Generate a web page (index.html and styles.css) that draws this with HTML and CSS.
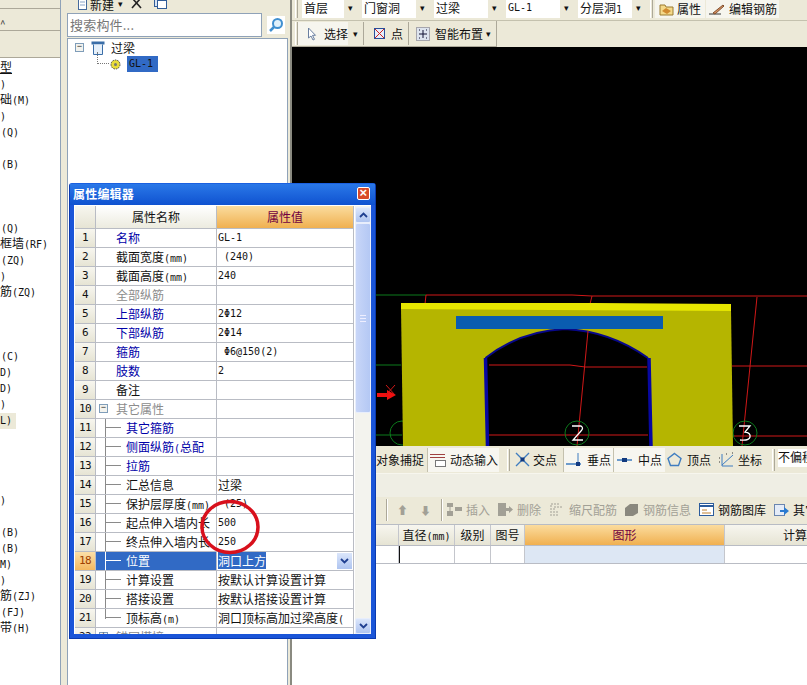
FILE: index.html
```html
<!DOCTYPE html>
<html lang="zh">
<head>
<meta charset="utf-8">
<title>属性编辑器</title>
<link rel="stylesheet" href="styles.css">
</head>
<body>
<div class="app">
  <aside class="left">
    <div class="l-band l-band-a"></div>
    <div class="l-band l-band-b"><span class="caret">^</span></div>
    <div class="l-band l-band-c"></div>
    <div class="l-list">
      <div class="li u">型</div><div class="li"><i>)</i></div><div class="li">础<i>(M)</i></div><div class="li"><i>)</i></div><div class="li pad"><i>(Q)</i></div><div class="li"></div><div class="li pad"><i>(B)</i></div><div class="li"></div><div class="li"></div><div class="li"></div>
      <div class="li pad"><i>(Q)</i></div><div class="li">框墙<i>(RF)</i></div><div class="li pad"><i>(ZQ)</i></div><div class="li"><i>)</i></div><div class="li">筋<i>(ZQ)</i></div><div class="li"></div><div class="li"></div><div class="li"></div>
      <div class="li pad"><i>(C)</i></div><div class="li"><i>D)</i></div><div class="li"><i>D)</i></div><div class="li"><i>)</i></div><div class="li"><i class="cur">L)</i></div><div class="li"></div><div class="li"></div><div class="li"></div><div class="li"></div>
      <div class="li"><i>)</i></div><div class="li"></div><div class="li pad"><i>(B)</i></div><div class="li pad"><i>(B)</i></div><div class="li"><i>M)</i></div><div class="li"><i>)</i></div><div class="li">筋<i>(ZJ)</i></div><div class="li pad"><i>(FJ)</i></div><div class="li">带<i>(H)</i></div>
    </div>
  </aside>

  <section class="mid">
    <div class="mid-bar">
      <svg class="mb-ic" viewBox="0 0 9 13"><rect x="0.500" y="1.500" width="8" height="11" fill="#fff" stroke="#456a9c"/><path d="M2 5h5M2 8h5" stroke="#8aa5c8"/></svg>
      <span class="mb-txt">新建</span><span class="mb-arrow">▾</span>
      <svg class="ic-x" viewBox="0 0 11 11"><path d="M1 10 9 1M2 1l8 9" stroke="#222" stroke-width="1.600"/></svg>
      <svg class="ic13" viewBox="0 0 14 13"><rect x="1.500" y="0.500" width="8" height="9" fill="#d8e4f4" stroke="#2f5c98"/><rect x="4.500" y="3.500" width="9" height="8" fill="#fff" stroke="#2f5c98"/></svg>
    </div>
    <div class="search">
      <div class="search-in">搜索构件...</div>
      <div class="search-btn"><svg viewBox="0 0 16 16" width="16" height="16"><circle cx="9.500" cy="6.500" r="4.500" fill="#dff0fb" stroke="#3f8fd0" stroke-width="2"/><path d="M6 10 2 14" stroke="#3f8fd0" stroke-width="2.500"/></svg></div>
    </div>
    <div class="tree">
      <div class="t-root">
        <span class="box">−</span>
        <svg class="t-ic" viewBox="0 0 14 14"><rect x="0.500" y="0.500" width="13" height="3" fill="#3b6ea8"/><path d="M2.500 3.500v10h9v-10" fill="#e6f0fa" stroke="#3b6ea8"/></svg>
        <span>过梁</span>
      </div>
      <div class="t-child">
        <span class="dots"></span>
        <svg class="t-gear" viewBox="0 0 11 11"><circle cx="5.500" cy="5.500" r="4.500" fill="#e8dc3a" stroke="#444" stroke-dasharray="1.500 1"/><circle cx="5.500" cy="5.500" r="1.500" fill="#777"/></svg>
        <span class="t-sel m">GL-1</span>
      </div>
    </div>
  </section>

  <main class="right">
    <div class="bar1">
      <span class="grip"></span>
      <div class="sel s1"><span>首层</span><b>▾</b></div>
      <div class="sel s2"><span>门窗洞</span><b>▾</b></div>
      <div class="sel s2"><span>过梁</span><b>▾</b></div>
      <div class="sel s2"><span class="m">GL-1</span><b>▾</b></div>
      <div class="sel s2"><span>分层洞<i class="m">1</i></span><b>▾</b></div>
      <span class="grip g-b1"></span>
      <div class="tb tb-a"><svg class="ic16" viewBox="0 0 16 14"><path d="M1 3h5l1 2h7v8H1z" fill="#f4d98a" stroke="#9a7a30"/><path d="M3 9l4-3 5 3-4 3z" fill="#d08a30"/></svg>属性</div>
      <div class="tb tb-b"><svg class="ic16" viewBox="0 0 16 14"><path d="M0 12h12" stroke="#333"/><path d="M4 11 14 3l1 1-9 8z" fill="#d89060" stroke="#805030"/></svg>编辑钢筋</div>
    </div>
    <div class="bar2">
      <div class="bar2-in">
        <span class="grip"></span>
        <div class="tb2 pick"><svg class="ic-ptr" viewBox="0 0 10 14"><path d="M1.500 1v10l2.500-2 2 4 1.500-.7-2-4h3z" fill="#fff" stroke="#6a7fa0"/></svg><span>选择</span><b>▾</b></div>
        <div class="tb2 pt"><svg class="ic-pt" viewBox="0 0 11 11"><rect x="0.500" y="0.500" width="10" height="10" fill="#e6eefa" stroke="#2a4f9a"/><path d="M1 1l9 9M10 1l-9 9" stroke="#d02020"/></svg><span>点</span></div>
        <div class="tb2 smart"><svg class="ic-sm" viewBox="0 0 14 14"><rect x="0.500" y="0.500" width="13" height="13" fill="#dde4ee" stroke="#667" stroke-dasharray="1 1"/><path d="M7 3v8M3 7h8" stroke="#113"/><path d="M3 3h1M10 3h1M3 11h1M10 11h1" stroke="#113"/></svg><span>智能布置</span><b>▾</b></div>
      </div>
    </div>
    <div class="canvas">
      <svg class="scene" viewBox="292 47 515 399" width="515" height="399">
        <g fill="none">
          <path d="M292 295H426M292 365H401M292 435H402" stroke="#0c7a1c"/>
          <path d="M426 295H572L592 296H807M426 295 425 304M592 296 590 304M757 297 742 446M732 366H807M733 436H807" stroke="#d01818"/>
          <circle cx="745" cy="433" r="12" stroke="#0c7a1c"/><circle cx="402" cy="433" r="12" stroke="#0c7a1c"/>
        </g>
        <path d="M401 308 731 310 733 446H403Z" fill="#b5b500"/>
        <path d="M401 303 595 303 731 304V311L401 309Z" fill="#e6e600"/>
        <path d="M485 358Q520 331 565 329Q610 331 648 358L651 446H487Z" fill="#000"/>
        <path d="M485.500 358Q520 331 565 329Q610 331 648 358" fill="none" stroke="#08088a" stroke-width="2"/>
        <path d="M485.500 358 487.500 446M649 358 651 446" fill="none" stroke="#0808a0" stroke-width="3.500"/>
        <path d="M489 365H570L585 367H647M489 435H648M588 331 577 446" fill="none" stroke="#d01818"/>
        <circle cx="577" cy="433" r="12" fill="none" stroke="#0c7a1c"/>
        <rect x="456" y="316" width="207" height="13" fill="#0a5cb0"/>
        <path d="M377 393h10v-3l9 5-9 5v-3h-10z" fill="#f01010"/>
        <path d="M386 385l9 10M395 385l-9 10" stroke="#d01818" fill="none"/>
        <path d="M572 426h9q3 2 0 5l-8 9h10M739 426h11l-5 6q6 1 5 5t-10 3" fill="none" stroke="#fff" stroke-width="1.300"/>
      </svg>
    </div>
    <div class="status">
      <div class="st-fill"></div>
      <div class="st-item st-snap">对象捕捉</div>
      <div class="st-btn st-dyn"><svg class="ic16b" viewBox="0 0 16 14"><path d="M0 1.500h15M0 4.500h15" stroke="#a04040"/><rect x="5.500" y="7.500" width="10" height="6" fill="#fff" stroke="#777"/></svg>动态输入</div>
      <span class="grip g-st"></span>
      <div class="st-item st-x"><svg class="ic15" viewBox="0 0 15 15"><path d="M1 1l13 13M14 1 1 14" stroke="#3f7dc0" stroke-width="1.400"/><rect x="5.500" y="5.500" width="4" height="4" fill="#123a80"/></svg>交点</div>
      <div class="st-btn st-perp"><svg class="ic15" viewBox="0 0 15 15"><path d="M0 12h15" stroke="#3f7dc0" stroke-width="1.500"/><path d="M12 1v13" stroke="#3f7dc0"/><rect x="10" y="10" width="4" height="4" fill="#123a80"/></svg>垂点</div>
      <div class="st-btn st-mid"><svg class="ic15" viewBox="0 0 15 15"><path d="M0 8h15" stroke="#3f7dc0" stroke-width="1.500"/><rect x="5" y="6" width="5" height="4" fill="#123a80"/></svg>中点</div>
      <div class="st-item st-top"><svg class="ic15" viewBox="0 0 15 15"><path d="M7.500 1.500 14 6.500 11.500 13.500H3.500L1 6.500Z" fill="none" stroke="#3f7dc0" stroke-width="1.400"/></svg>顶点</div>
      <div class="st-item st-co"><svg class="ic17" viewBox="0 0 17 15"><path d="M4 2v12h11M4 13 15 3" stroke="#3f7dc0" fill="none"/><path d="M1 6h1M1 10h1M8 2h1M14 1h1" stroke="#333"/></svg>坐标</div>
      <span class="grip g-st2"></span>
      <div class="st-sel">不偏移</div>
    </div>
    <div class="band"></div>
    <div class="bar3">
      <span class="sep3"></span>
      <span class="ar3">⬆</span><span class="ar3">⬇</span>
      <span class="sep3"></span>
      <div class="act off a-ins"><svg class="ic15" viewBox="0 0 15 13"><path d="M0 0h6v4H0zM0 8h6v5H0zM8 4h7v4H8z" fill="#a2a096"/><path d="M3 4v4" stroke="#a2a096"/></svg>插入</div>
      <div class="act off a-del"><svg class="ic15" viewBox="0 0 15 13"><path d="M0 0h8v13H0zM8 5h3V3l4 3.500L11 10V8H8z" fill="#a2a096"/></svg>删除</div>
      <div class="act off a-scale"><svg class="ic15" viewBox="0 0 15 13"><path d="M1 13V1h9M4 13V4h8M7 13V7" fill="none" stroke="#a2a096" stroke-dasharray="2 1"/></svg>缩尺配筋</div>
      <div class="act off a-info"><svg class="ic15" viewBox="0 0 15 13"><path d="M1 5 6 1h8v9l-5 3H1z" fill="#8a887e"/></svg>钢筋信息</div>
      <div class="act a-lib"><svg class="ic15" viewBox="0 0 15 13"><rect x="0.500" y="0.500" width="14" height="12" fill="#fff" stroke="#2c5c9c"/><path d="M1 3h13" stroke="#2c5c9c" stroke-width="2"/><path d="M3 7h5M3 10h9" stroke="#c08030"/></svg>钢筋图库</div>
      <div class="act a-oth"><svg class="ic15" viewBox="0 0 15 13"><rect x="0.500" y="1.500" width="10" height="11" fill="#e4ecf8" stroke="#6a86b0"/><path d="M6 7h4V4l5 4-5 4V9H6z" fill="#2a7ad0"/></svg>其它</div>
    </div>
    <div class="grid-h">
      <div class="c c0"></div><div class="c c1">直径<i class="m">(mm)</i></div><div class="c c2">级别</div><div class="c c3">图号</div><div class="c c4">图形</div><div class="c c5">计算</div>
    </div>
    <div class="grid-r">
      <div class="c c0"></div><div class="c c1 caret-l"></div><div class="c c2"></div><div class="c c3"></div><div class="c c4"></div><div class="c c5"></div>
    </div>
  </main>
</div>

<div class="dlg">
  <div class="dlg-t"><span>属性编辑器</span><span class="dlg-x">×</span></div>
  <div class="dlg-b">
    <div class="sheet">
      <div class="r hd"><div class="n"></div><div class="k">属性名称</div><div class="v">属性值</div></div>
      <div class="r"><div class="n">1</div><div class="k a">名称</div><div class="v m">GL-1</div></div>
      <div class="r"><div class="n">2</div><div class="k">截面宽度<i class="m">(mm)</i></div><div class="v m">&nbsp;(240)</div></div>
      <div class="r"><div class="n">3</div><div class="k">截面高度<i class="m">(mm)</i></div><div class="v m">240</div></div>
      <div class="r"><div class="n">4</div><div class="k off">全部纵筋</div><div class="v"></div></div>
      <div class="r"><div class="n">5</div><div class="k a">上部纵筋</div><div class="v m">2Φ12</div></div>
      <div class="r"><div class="n">6</div><div class="k a">下部纵筋</div><div class="v m">2Φ14</div></div>
      <div class="r"><div class="n">7</div><div class="k a">箍筋</div><div class="v m">&nbsp;Φ6@150(2)</div></div>
      <div class="r"><div class="n">8</div><div class="k a">肢数</div><div class="v m">2</div></div>
      <div class="r"><div class="n">9</div><div class="k">备注</div><div class="v"></div></div>
      <div class="r"><div class="n">10</div><div class="k off grp"><span class="box abs">−</span>其它属性</div><div class="v"></div></div>
      <div class="r"><div class="n">11</div><div class="k a sub">其它箍筋</div><div class="v"></div></div>
      <div class="r"><div class="n">12</div><div class="k a sub">侧面纵筋<i class="m">(</i>总配</div><div class="v"></div></div>
      <div class="r"><div class="n">13</div><div class="k a sub">拉筋</div><div class="v"></div></div>
      <div class="r"><div class="n">14</div><div class="k sub">汇总信息</div><div class="v">过梁</div></div>
      <div class="r"><div class="n">15</div><div class="k sub">保护层厚度<i class="m">(mm)</i></div><div class="v m">&nbsp;(25)</div></div>
      <div class="r"><div class="n">16</div><div class="k sub">起点伸入墙内长</div><div class="v m">500</div></div>
      <div class="r"><div class="n">17</div><div class="k sub">终点伸入墙内长</div><div class="v m">250</div></div>
      <div class="r now"><div class="n">18</div><div class="k sub">位置</div><div class="v"><span class="hl">洞口上方</span><span class="dd"><svg viewBox="0 0 9 6" width="9" height="6"><path d="M1 1l3.500 3.500L8 1" fill="none" stroke="#1f3f90" stroke-width="1.800"/></svg></span></div></div>
      <div class="r"><div class="n">19</div><div class="k sub">计算设置</div><div class="v">按默认计算设置计算</div></div>
      <div class="r"><div class="n">20</div><div class="k sub">搭接设置</div><div class="v">按默认搭接设置计算</div></div>
      <div class="r"><div class="n">21</div><div class="k sub last">顶标高<i class="m">(m)</i></div><div class="v">洞口顶标高加过梁高度<i class="m">(</i></div></div>
      <div class="r tail"><div class="n">22</div><div class="k off grp"><span class="box abs">+</span>锚固搭接</div><div class="v"></div></div>
    </div>
    <div class="sb">
      <div class="sb-b"><svg viewBox="0 0 9 6" width="9" height="6"><path d="M1 5l3.500-3.500L8 5" fill="none" stroke="#1f3f90" stroke-width="1.800"/></svg></div>
      <div class="sb-th"><span class="sb-g"></span></div>
      <div class="sb-tr"></div>
      <div class="sb-b"><svg viewBox="0 0 9 6" width="9" height="6"><path d="M1 1l3.500 3.500L8 1" fill="none" stroke="#1f3f90" stroke-width="1.800"/></svg></div>
    </div>
  </div>
</div>
<svg class="ring" viewBox="0 0 62 56" width="62" height="56"><ellipse cx="31" cy="28" rx="28" ry="25.500" fill="none" stroke="#d8101c" stroke-width="3.500"/></svg>
</body>
</html>
```
FILE: styles.css
```css
* { box-sizing: border-box; }
html, body { margin: 0; height: 100%; overflow: hidden; }
body { font: 12px/16px "Noto Sans CJK SC", sans-serif; color: #111; background: #fff; position: relative; }
i { font-style: normal; }
.m, .li i { font-family: "DejaVu Sans Mono", "Noto Sans CJK SC", monospace; font-size: 10px; }
.app { display: flex; width: 807px; height: 685px; background: #ece9d8; }

/* left */
.left { width: 61px; flex: none; display: flex; flex-direction: column; border-right: 1px solid #8fa2b8; }
.l-band { background: #ece9d8; border-bottom: 1px solid #aca899; }
.l-band-a { height: 9px; }
.l-band-b { height: 22px; font-size: 10px; line-height: 30px; color: #333; }
.l-band-c { height: 27px; }
.l-list { flex: 1; background: #fff; padding-top: 1px; overflow: hidden; }
.li { height: 16px; line-height: 16px; white-space: nowrap; }
.li.pad { padding-left: 1px; }
.li.u { text-decoration: underline; }
.cur { display: inline-block; width: 16px; background: #ece9d8; }

/* middle */
.mid { width: 229px; flex: none; display: flex; flex-direction: column; padding: 0 0 0 6px; background: #ece9d8; }
.mid-bar { height: 13px; display: flex; align-items: center; padding-left: 11px; overflow: hidden; }
.mb-ic { width: 9px; height: 13px; margin-top: -6px; flex: none; }
.ic13 { width: 14px; height: 13px; margin-top: -6px; flex: none; }
.mb-txt { margin: -4px 0 0 3px; width: 24px; flex: none; }
.mb-arrow { margin: -6px 0 0 4px; width: 12px; font-size: 9px; flex: none; }
.ic-x { width: 11px; height: 11px; margin: -6px 11px 0 1px; flex: none; }
.search { height: 24px; display: flex; align-items: center; }
.search-in { width: 195px; height: 24px; border: 1px solid #8fa2b8; background: #fff; color: #777; font-size: 13px; line-height: 21px; padding-left: 2px; letter-spacing: .2px; }
.search-btn { margin-left: 5px; width: 18px; height: 18px; background: #fff; padding: 1px; }
.tree { flex: 1; margin: 1px 2px 0 0; background: #fff; border: 1px solid #8fa2b8; border-bottom: 0; padding: 0 0 0 7px; }
.t-root { display: flex; align-items: center; height: 17px; }
.box { width: 9px; height: 9px; border: 1px solid #7f9db9; background: #f3f3ee; font: 9px/7px "Liberation Mono", monospace; text-align: center; color: #222; flex: none; }
.t-ic { width: 14px; height: 14px; margin: 0 6px 0 7px; flex: none; }
.t-child { display: flex; align-items: center; height: 16px; padding-left: 22px; }
.dots { width: 12px; height: 12px; margin-top: -12px; border-left: 1px dotted #777; border-bottom: 1px dotted #777; flex: none; }
.t-gear { width: 11px; height: 11px; margin-left: 1px; flex: none; }
.t-sel { margin-left: 6px; background: #316ac5; color: #111; width: 31px; height: 16px; line-height: 16px; padding-left: 2px; }

/* right */
.right { flex: 1; min-width: 0; display: flex; flex-direction: column; border-left: 2px solid #8a8a80; overflow: hidden; background: #ece9d8; position: relative; }
.right::after { content: ""; flex: 1; background: #fff; }
.grip { width: 3px; flex: none; border-left: 1px solid #fff; border-right: 1px solid #aca899; }
.bar1 { height: 21px; flex: none; display: flex; align-items: stretch; padding: 0 0 2px 3px; border-bottom: 1px solid #c4c1ae; }
.sel { display: flex; justify-content: space-between; background: #fff; height: 18px; line-height: 15px; padding-left: 2px; overflow: hidden; margin-right: 5px; flex: none; }
.sel b { width: 13px; background: #ece9d8; font-size: 9px; font-weight: 400; text-align: center; color: #111; }
.s1 { width: 55px; margin-left: 4px; }
.s2 { width: 67px; }
.g-b1 { margin-right: 2px; }
.tb { display: flex; align-items: center; gap: 2px; background: #f6f5ee; height: 18px; flex: none; }
.tb-a { width: 50px; margin-right: 1px; padding-left: 4px; }
.tb-b { width: 73px; padding-left: 3px; gap: 4px; }
.ic16 { width: 16px; height: 14px; flex: none; }
.bar2 { height: 26px; flex: none; display: flex; }
.bar2-in { width: 205px; display: flex; align-items: stretch; padding: 1px 0 1px 3px; background: #ece9d8; border-right: 1px solid #aca899; border-bottom: 1px solid #aca899; }
.tb2 { display: flex; align-items: center; flex: none; border-right: 1px solid #aca899; }
.tb2 b { font-size: 9px; font-weight: 400; margin-left: 3px; }
.pick { width: 66px; padding-left: 3px; background: linear-gradient(90deg, #f6f5ee 50px, transparent 50px); }
.pick b { margin-left: 5px; }
.ic-ptr { width: 10px; height: 14px; margin: 0 7px 0 6px; flex: none; }
.pt { width: 45px; padding-left: 10px; }
.ic-pt { width: 11px; height: 11px; margin-right: 6px; flex: none; }
.smart { border: 0; padding-left: 7px; }
.ic-sm { width: 14px; height: 14px; margin-right: 5px; flex: none; }
.canvas { height: 399px; flex: none; background: #000; }
.scene { display: block; }
.status { height: 27px; flex: none; display: flex; align-items: center; white-space: nowrap; }
.st-fill { width: 84px; flex: none; }
.st-item, .st-btn { display: flex; align-items: center; flex: none; height: 24px; }
.st-btn { background: #f7f6f0; border-left: 1px solid #c4c1ae; }
.st-snap { width: 50px; }
.st-dyn { width: 72px; padding-left: 2px; gap: 4px; margin-left: 1px; }
.ic16b { width: 16px; height: 14px; flex: none; }
.ic17 { width: 17px; height: 15px; flex: none; }
.ic15 { width: 15px; height: 15px; flex: none; }
.grip.g-st { height: 22px; margin: 0 5px 0 8px; }
.st-x { width: 48px; gap: 3px; }
.st-perp { width: 50px; padding-left: 2px; gap: 6px; }
.st-mid { width: 52px; padding-left: 3px; gap: 6px; }
.st-top { width: 53px; padding-left: 2px; gap: 5px; }
.st-co { width: 54px; gap: 3px; }
.grip.g-st2 { height: 22px; margin-right: 3px; }
.st-sel { background: #fff; width: 60px; height: 18px; line-height: 15px; flex: none; margin-top: -4px; }
.band { height: 24px; flex: none; background: #efeee4; border-top: 1px solid #f7f6ee; }
.bar3 { height: 28px; flex: none; display: flex; align-items: center; padding: 0 0 2px 94px; border-bottom: 1px solid #b8bcc4; white-space: nowrap; }
.sep3 { width: 2px; height: 22px; border-left: 1px solid #aca899; border-right: 1px solid #fff; flex: none; }
.ar3 { width: 23px; color: #a2a096; font-size: 11px; text-align: center; flex: none; }
.sep3 + .ar3 { margin-left: 3px; }
.ar3 + .sep3 { margin-left: 4px; }
.act { display: flex; align-items: center; gap: 4px; flex: none; }
.off { color: #a2a096; }
.a-ins { margin-left: 4px; width: 51px; }
.a-del { width: 52px; }
.a-scale { width: 74px; }
.a-info { width: 75px; }
.a-lib { width: 75px; }
.grid-h, .grid-r { display: flex; flex: none; }
.grid-h { height: 21px; background: linear-gradient(#f7f6ef, #e6e4d4); line-height: 19px; border-bottom: 1px solid #b9bcc4; }
.grid-r { height: 18px; background: #fff; border-bottom: 1px solid #b9bcc4; }
.c { flex: none; border-right: 1px solid #c4c6cc; text-align: center; }
.c0 { width: 107px; }
.c1 { width: 56px; }
.c2 { width: 36px; }
.c3 { width: 34px; }
.c4 { width: 200px; }
.c5 { flex: 1; border: 0; text-align: right; white-space: nowrap; overflow: hidden; }
.grid-h .c4 { background: linear-gradient(#fbdc9e, #f0b050); color: #700040; }
.grid-r .c4 { background: #dde7f4; }
.caret-l { border-left: 1px solid #111; }

/* dialog */
.dlg { position: absolute; left: 69px; top: 183px; width: 307px; height: 456px; background: #1a55d8; border: 1px solid #0a3ab0; border-top-color: #1a60e0; border-radius: 3px 3px 0 0; padding: 0 4px 4px; display: flex; flex-direction: column; }
.dlg-t { height: 21px; flex: none; display: flex; justify-content: space-between; align-items: center; color: #fff; font-weight: 700; line-height: 18px; background: linear-gradient(#2a78e8, #0f52d0); margin: 0 -4px; padding: 0 4px 2px 3px; letter-spacing: .2px; }
.dlg-x { width: 13px; height: 13px; margin-right: 1px; background: #d84a28; border: 1px solid #fff; border-radius: 2px; color: #fff; font: 700 13px/10px "Liberation Sans", sans-serif; text-align: center; }
.dlg-b { flex: 1; min-height: 0; display: flex; padding: 1px 0 0 1px; overflow: hidden; background: #fff; }
.sheet { width: 279px; flex: none; overflow: hidden; background: #fff; }
.r { display: flex; height: 19px; line-height: 18px; }
.n { width: 21px; flex: none; background: linear-gradient(#f7f6ef, #e6e4d4); border-right: 1px solid #b9bcc4; border-bottom: 1px solid #b9bcc4; text-align: center; font: 11px/18px "DejaVu Sans Mono", monospace; letter-spacing: -.6px; }
.k { width: 121px; flex: none; border-right: 1px solid #b9bcc4; border-bottom: 1px solid #b9bcc4; padding-left: 20px; white-space: nowrap; overflow: hidden; position: relative; }
.v { width: 137px; flex: none; border-right: 1px solid #b9bcc4; border-bottom: 1px solid #b9bcc4; padding-left: 1px; white-space: nowrap; overflow: hidden; position: relative; }
.a { color: #0000a8; }
.k.off { color: #8c8c8c; }
.hd { height: 23px; line-height: 21px; }
.hd .k { background: linear-gradient(#fff, #ecebdf); text-align: center; padding-left: 0; }
.hd .v { background: linear-gradient(#fbdc9e, #f0b050); color: #700040; text-align: center; padding-left: 0; }
.abs { position: absolute; left: 3px; top: 4px; color: #222; }
.sub { padding-left: 30px; }
.sub::before { content: ""; position: absolute; left: 9px; top: -1px; bottom: -1px; width: 15px; border-left: 1px solid #8a8a8a; background: linear-gradient(#8a8a8a, #8a8a8a) 0 9px / 15px 1px no-repeat; }
.sub.last::before { bottom: 8px; }
.now .n { background: linear-gradient(#fce0a8, #f4b860); color: #a04000; }
.now .k { background: #316ac5; color: #fff; }
.now .k::before { border-color: #fff; background: linear-gradient(#fff, #fff) 0 9px / 15px 1px no-repeat; }
.hl { background: #316ac5; color: #fff; }
.dd { position: absolute; right: 1px; top: 1px; width: 15px; height: 16px; background: linear-gradient(#dbe6fb, #aec4f0); display: flex; align-items: center; justify-content: center; }
.sb { flex: 1; margin-left: 1px; display: flex; flex-direction: column; background: #f3f3ee; padding-top: 1px; height: 428px; }
.sb-b { height: 16px; flex: none; background: linear-gradient(#dbe6fb, #aec4f0); border: 1px solid #e8eefc; border-radius: 2px; display: flex; align-items: center; justify-content: center; }
.sb-th { height: 190px; flex: none; background: linear-gradient(90deg, #c8d6f8, #b4c8f4); border: 1px solid #e8eefc; border-radius: 2px; display: flex; align-items: center; justify-content: center; }
.sb-g { width: 6px; height: 7px; border-top: 1px solid #eef; border-bottom: 1px solid #eef; background: linear-gradient(#eef, #eef) 0 2px / 6px 1px no-repeat; }
.sb-tr { flex: 1; }
.ring { position: absolute; left: 199px; top: 499px; }
```
